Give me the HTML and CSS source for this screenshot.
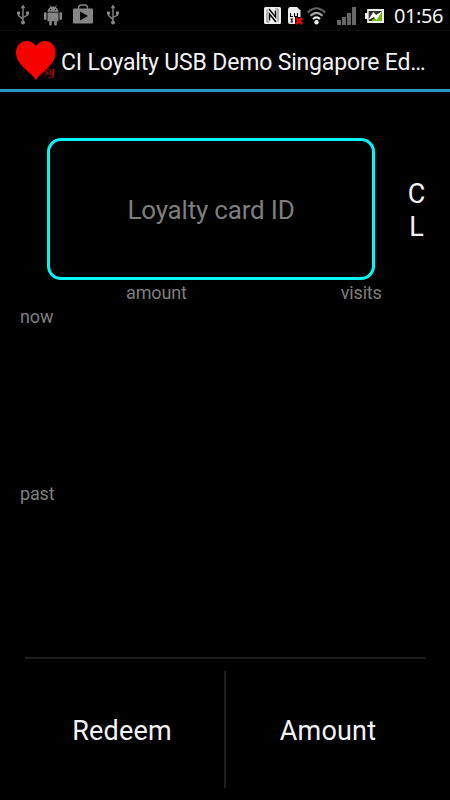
FILE: index.html
```html
<!DOCTYPE html>
<html lang="en">
<head>
<meta charset="utf-8">
<title>CI Loyalty USB Demo Singapore Edition</title>
<link rel="stylesheet" href="styles.css">
</head>
<body>
<svg width="0" height="0" class="defs">
  <symbol id="usb" viewBox="0 0 12 22">
    <path d="M6 3v14M1.5 8v3.5L6 15.500M10.500 8v3L6 13.500" fill="none" stroke="#858585" stroke-width="1.400"/>
    <path d="M6 .5l2.300 3.700H3.700zM0 7.500h3v3H0zM9 7.500h3v3H9z" fill="#858585"/>
    <circle cx="6" cy="18.500" r="2" fill="#858585"/>
  </symbol>
</svg>
<header class="status">
  <div class="notifications">
    <svg class="usb" width="12" height="22"><use href="#usb"/></svg>
    <svg class="android" width="18" height="21" viewBox="0 0 18 21" fill="#858585">
      <path d="M3.500 6.800C3.700 4.500 4.800 3 6.200 2.200L5.200.6l.6-.4 1.100 1.600a6 6 0 0 1 4.200 0L12.200.2l.6.400-1 1.600c1.400.8 2.500 2.300 2.700 4.600z"/>
      <path d="M3.500 7.500h11v8.700h-1.700v3.300c0 1.300-2.600 1.300-2.600 0v-3.300H7.800v3.300c0 1.300-2.600 1.300-2.600 0v-3.300H3.500z"/>
      <rect x="0" y="7.300" width="2.600" height="7.700" rx="1.200"/><rect x="15.400" y="7.300" width="2.600" height="7.700" rx="1.200"/>
      <circle cx="6.500" cy="4.600" r=".7" fill="#000"/><circle cx="11.500" cy="4.600" r=".7" fill="#000"/>
    </svg>
    <svg class="store" width="20" height="20" viewBox="0 0 20 20">
      <path d="M5.500 5V3.500Q6 1 8 1h4q2 0 2.500 2.500V5" fill="none" stroke="#858585" stroke-width="1.400"/>
      <rect y="4.500" width="20" height="15" rx="1" fill="#858585"/>
      <path d="M7 7.500v9l8-4.500z" fill="#000"/>
    </svg>
    <svg class="usb last" width="12" height="22"><use href="#usb"/></svg>
  </div>
  <div class="system">
    <svg class="nfc" width="17" height="17" viewBox="0 0 17 17">
      <rect width="17" height="17" rx="1.500" fill="#eee"/>
      <path d="M5 2L11.500 10V3.500M12 15L5.500 7v6.500" fill="none" stroke="#000" stroke-width="1.500"/>
      <path d="M3 2.500v12.500h2.500M14 14.500V2h-2.500" fill="none" stroke="#555" stroke-width=".8"/>
    </svg>
    <svg class="sim" width="15" height="18" viewBox="0 0 15 18">
      <path d="M0 2.500Q0 0 2 0h7l3.500 3.500V17H2Q0 17 0 15z" fill="#eee"/>
      <path d="M2.500 6v3.500H5M6.500 6v3.500H9.500V6M2.500 12H5M3.800 12v3M2.500 15H5" fill="none" stroke="#000" stroke-width="1.100"/>
      <path d="M7 10h7v8H7z" fill="#000"/>
      <path d="M8 11l6 6M14 11l-6 6" stroke="#f00000" stroke-width="2.500"/>
    </svg>
    <svg class="wifi" width="19" height="18" viewBox="0 0 19 18" fill="none" stroke-width="2">
      <path d="M.8 5.500Q9.500-3 18.200 5.500" stroke="#666"/>
      <path d="M3.500 8.800Q9.500 3 15.500 8.800" stroke="#aaa"/>
      <path d="M6 12Q9.500 8.700 13 12" stroke="#eee"/>
      <circle cx="9.500" cy="15.300" r="2.200" fill="#eee"/>
    </svg>
    <svg class="signal" width="19" height="18" viewBox="0 0 19 18" fill="#666">
      <path d="M0 13h4v5H0zM5 10h4v8H5zM10 6h4v12h-4zM15 0h4v18h-4z"/>
    </svg>
    <svg class="battery" width="19" height="14" viewBox="0 0 18 14" preserveAspectRatio="none">
      <path d="M2 0h16v14H2v-4H0V4h2z" fill="#eee"/>
      <path d="M3.500 2h12.500v10H3.500z" fill="#333"/>
      <path d="M16 2v10H6z" fill="#75b811"/>
      <path d="M3 11L8 3l2.500 3L16 2.500 11 11 8.500 8z" fill="#fff"/>
    </svg>
    <span class="clock">01:56</span>
  </div>
</header>
<div class="titlebar">
  <svg class="heart" width="40" height="40" viewBox="0 0 40 40">
    <path d="M20 39.500C17 32 0 25 0 11.500 0 4.500 5 0 10.500 0 15 0 18.500 2.500 20 5.500 21.500 2.500 25 0 29.500 0 35 0 39.500 4.500 39.500 11.500 39.500 25 23 32 20 39.500z" fill="#f80000"/>
    <text x="28" y="33.500" class="mark">sg</text>
  </svg>
  <h1>CI Loyalty USB Demo Singapore Ed…</h1>
</div>
<main>
  <section class="entry">
    <div class="card">Loyalty card ID</div>
    <div class="clear"><span>C</span><span>L</span></div>
  </section>
  <section class="history">
    <div class="heads"><span class="amount">amount</span><span class="visits">visits</span></div>
    <div class="row now">now</div>
    <div class="row past">past</div>
  </section>
</main>
<footer>
  <div class="action redeem">Redeem</div>
  <div class="divider"></div>
  <div class="action total">Amount</div>
</footer>
</body>
</html>
```
FILE: styles.css
```css
* { box-sizing: border-box; }
body {
  margin: 0;
  width: 450px;
  height: 800px;
  overflow: hidden;
  display: flex;
  flex-direction: column;
  background: #000;
  color: #f3f3f3;
  font-family: Roboto, sans-serif;
}
.defs { position: absolute; }
svg { flex: none; display: block; }
.status {
  flex: none;
  height: 31px;
  display: flex;
  justify-content: space-between;
  border-bottom: 1px solid #0c0c0c;
}
.notifications, .system { display: flex; align-items: flex-start; }
.notifications { padding-left: 17px; }
.usb { margin-top: 4px; }
.android { margin: 5px 0 0 15px; }
.store { margin: 4px 0 0 11px; }
.last { margin-left: 14px; }
.system { padding-right: 5px; }
.nfc { margin-top: 7px; }
.sim { margin: 7px 0 0 7px; }
.wifi { margin: 7px 0 0 4px; }
.signal { margin: 7px 0 0 11px; }
.battery { margin: 9px 0 0 9px; }
.clock {
  margin-left: 10px;
  width: 51px;
  font: 20px/32px "Noto Sans", sans-serif;
  letter-spacing: -0.4px;
  white-space: nowrap;
}
.titlebar {
  flex: none;
  height: 61px;
  padding: 0 0 1px 16px;
  display: flex;
  align-items: center;
  border-bottom: 3px solid #2698c4;
}
.heart { margin-top: 2px; }
.mark {
  font: italic bold 12px "Liberation Serif", serif;
  fill: #a80000;
}
h1 {
  margin: 6px 0 0 5px;
  font-size: 23px;
  line-height: 30px;
  font-weight: 400;
  letter-spacing: -0.17px;
  white-space: nowrap;
}
main { flex: 1 1 0; min-height: 0; }
.entry {
  display: flex;
  padding: 46px 0 0 47px;
}
.card {
  flex: none;
  width: 328px;
  height: 142px;
  border: 3px solid #00f8f8;
  border-radius: 14px;
  font-size: 26px;
  line-height: 139px;
  letter-spacing: -0.2px;
  text-align: center;
  color: #7e7e7e;
}
.clear {
  display: flex;
  flex-direction: column;
  align-items: center;
  flex: none;
  width: 83px;
  padding-top: 40px;
  font-size: 27px;
  line-height: 33px;
}
.history { font-size: 18px; line-height: 24px; color: #7e7e7e; padding-top: 1px; letter-spacing: -0.15px; }
.heads { display: flex; padding-left: 126px; }
.heads .visits { margin-left: 154px; }
.row { padding-left: 20px; }
.now { height: 177px; }
.past { height: 176px; }
footer {
  flex: none;
  height: 143px;
  margin: 0 25px;
  border-top: 2px solid #1e1e1e;
  display: flex;
}
.action {
  flex: 1;
  text-align: center;
  font-size: 27px;
  line-height: 145px;
  letter-spacing: 0.2px;
}
.redeem { padding-right: 5px; }
.total { padding-left: 5px; }
.divider {
  width: 2px;
  height: 117px;
  margin-top: 12px;
  background: #1e1e1e;
}
```
